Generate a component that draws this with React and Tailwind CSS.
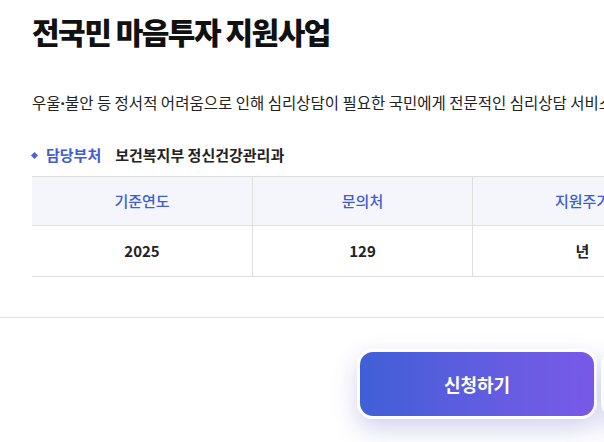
import React from 'react';

const font = { fontFamily: '"Noto Sans CJK KR", "Noto Sans", sans-serif' };

export default function App() {
  const cols = [
    { head: '기준연도', value: '2025' },
    { head: '문의처', value: '129' },
    { head: '지원주기', value: '년' },
  ];

  return (
    <div className="w-[604px] h-[442px] overflow-hidden bg-white" style={font}>
      {/* Title */}
      <div className="pl-[32px] pt-[10px]">
        <h1 className="text-[30px] leading-[42px] font-extrabold text-[#111] tracking-[-0.05em] whitespace-nowrap">
          전국민 마음투자 지원사업
        </h1>
      </div>

      {/* Description */}
      <p className="pl-[32px] mt-[38px] text-[15.5px] leading-[24px] text-[#222] whitespace-nowrap">
        우울<span className="font-['Noto_Sans'] font-bold">·</span>불안 등 정서적 어려움으로 인해 심리상담이 필요한 국민에게 전문적인 심리상담 서비스를 제공합니다
      </p>

      {/* Department */}
      <div className="pl-[32px] mt-[28px] flex items-center whitespace-nowrap">
        <span className="w-[5px] h-[5px] bg-[#4a63d8] rotate-45 mr-[9px]"></span>
        <span className="text-[15px] font-semibold text-[#3f5bd6] leading-[24px]">담당부처</span>
        <span className="ml-[14px] text-[15px] font-semibold text-[#222] leading-[24px]">보건복지부 정신건강관리과</span>
      </div>

      {/* Table */}
      <div className="ml-[32px] mt-[9px] w-[660px] border-t border-b border-[#dedede]">
        <div className="flex bg-[#f4f6fb] border-b border-[#dedede] h-[49px]">
          {cols.map((c, i) => (
            <div
              key={c.head}
              className={`w-[220px] flex items-center justify-center text-[15px] font-medium text-[#3f5bd6] ${i > 0 ? 'border-l border-[#dedede]' : ''}`}
            >
              {c.head}
            </div>
          ))}
        </div>
        <div className="flex h-[50px]">
          {cols.map((c, i) => (
            <div
              key={c.head}
              className={`w-[220px] flex items-center justify-center text-[15px] font-semibold text-[#222] ${i > 0 ? 'border-l border-[#dedede]' : ''}`}
            >
              {c.value}
            </div>
          ))}
        </div>
      </div>

      {/* Divider */}
      <div className="mt-[40px] border-t border-[#e2e2e2]"></div>

      {/* Bottom buttons */}
      <div className="flex gap-[4px] pl-[357px] mt-[31px]">
        <button className="shrink-0 w-[240px] h-[70px] rounded-[16px] border-[3px] border-white bg-gradient-to-r from-[#3f5fd7] to-[#795ae8] text-white text-[18px] font-bold shadow-[0_10px_24px_rgba(80,80,190,0.25)]">
          신청하기
        </button>
        <button className="shrink-0 w-[240px] h-[70px] rounded-[16px] border-[3px] border-white bg-white text-[#333] text-[18px] font-bold shadow-[0_10px_24px_rgba(80,80,190,0.2)]">
          목록
        </button>
      </div>
    </div>
  );
}
